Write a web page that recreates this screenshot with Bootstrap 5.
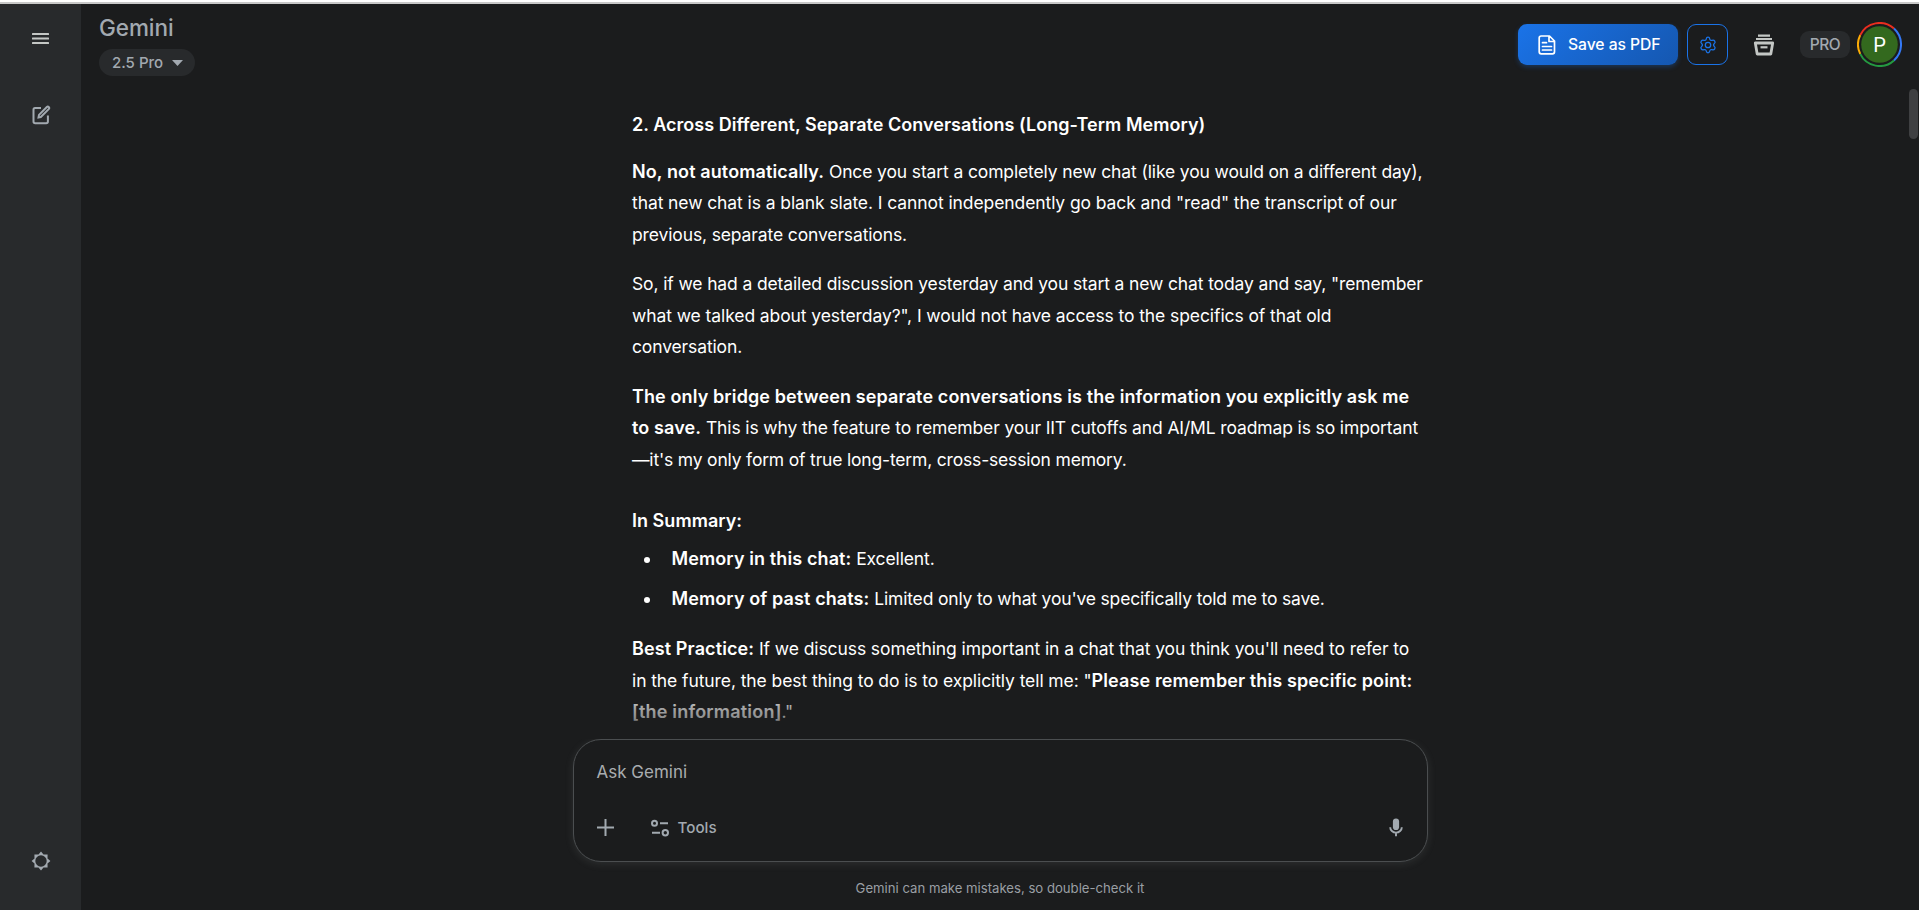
<!DOCTYPE html>
<html lang="en" data-bs-theme="dark">
<head>
<meta charset="utf-8">
<meta name="viewport" content="width=device-width, initial-scale=1">
<title>Gemini</title>
<link rel="stylesheet" href="https://cdn.jsdelivr.net/npm/bootstrap@5.3.0/dist/css/bootstrap.min.css">
<style>
  body { background: #1b1c1d; color: #fff; font-family: Inter, "Liberation Sans", sans-serif; }
  svg { display: block; flex: none; }
  .top-edge { height: 4px; background: #fff; border-bottom: 2px solid #c8c8c8; flex: none; }
  .rail { width: 81px; background: #282a2c; color: #a2a9b0; padding: 28px 0 39px; }
  .rail .icon-menu { color: #c4c7c5; margin-bottom: 60px; }
  .topbar { height: 85px; padding: 10px 17px 0 18px; flex: none; }
  .brand-name { font-size: 22.5px; line-height: 27px; letter-spacing: -.05px; color: #a2a9b0; font-weight: 450; }
  .model-pill { width: 96px; height: 27px; margin-top: 8px; padding: 0 12px 0 13px; background: #282a2c; color: #a2a9b0; font-size: 15px; font-weight: 500; line-height: 27px; }
  .actions { margin-top: 8px; height: 45px; }
  .btn-save { width: 160px; height: 41px; padding: 0 0 0 18px; gap: 10px; border: 0; border-radius: 9px; color: #fff; background: linear-gradient(135deg, #1a73e8, #1557b0); box-shadow: 0 2px 5px rgba(26,115,232,.3); font-size: 15.7px; font-weight: 500; letter-spacing: -.05px; line-height: 1; }
  .btn-gear { width: 41px; height: 41px; margin-left: 9px; padding: 0; border: 1px solid #1a73e8; border-radius: 9px; color: #1a73e8; }
  .icon-stack { margin-left: 25px; }
  .tier { width: 50px; height: 27px; border-radius: 9px; background: #282a2c; color: #a2a9b0; font-size: 15.5px; font-weight: 450; letter-spacing: -.5px; margin-left: 25px; margin-right: 7px; padding-top: 1px; }
  .col-chat { width: 855px; }
  .reading { height: 650px; padding: 20px 0 0 59.500px; font-size: 17.5px; line-height: 31.5px; letter-spacing: -.13px; white-space: nowrap; overflow: hidden; }
  .reading p, .reading h3 { margin: 0 0 18px; }
  .reading h3 { font-size: 18px; font-weight: 600; line-height: 31.5px; letter-spacing: .03px; }
  .reading h3.lead-head { margin-bottom: 15px; }
  .reading h3.list-head { margin-bottom: 6px; }
  .reading p.section-end { margin-bottom: 30px; }
  .reading b { font-size: 18px; font-weight: 600; letter-spacing: .11px; line-height: 1; }
  .reading .snug { letter-spacing: -.09px; }
  .reading .tight { letter-spacing: -.18px; }
  .reading .airy { letter-spacing: .2px; }
  .reading ul { margin: 0 0 19px; padding-left: 39.500px; list-style: none; }
  .reading li { position: relative; }
  .reading li::before { content: ""; position: absolute; left: -28px; top: 14px; width: 6px; height: 6px; border-radius: 50%; background: #fff; }
  .reading li + li { margin-top: 8.500px; }
  .fade-out { height: 46px; background: linear-gradient(rgba(27,28,29,0), rgba(27,28,29,.38) 30%, rgba(27,28,29,.5) 55%, #1b1c1d 95%); }
  .prompt-box { height: 123px; border: 1px solid #4b4e50; border-radius: 28px; background: #1b1c1d; box-shadow: 0 2px 9px rgba(154,160,166,.14); padding: 19px 24px 0 23px; color: #a2a9b0; }
  .ask { font-size: 17px; line-height: 26px; color: #a9acaf; }
  .prompt-tools { margin-top: 32px; }
  .icon-tools { margin: 1px 9px 0 37px; }
  .tools-label { font-size: 15.2px; font-weight: 500; line-height: 20px; padding-top: 1px; }
  .notice { font-size: 13.15px; line-height: 18px; color: #9a9fa4; margin-top: 17px; }
  .scroll-thumb { right: 1px; top: 85px; width: 9px; height: 50px; border-radius: 5px; background: #3f4042; }
</style>
</head>
<body class="vh-100 overflow-hidden d-flex flex-column">
<div class="top-edge"></div>
<div class="d-flex flex-grow-1">
  <aside class="rail d-flex flex-column align-items-center">
    <svg class="icon-menu" width="17" height="13" viewBox="0 0 17 13" fill="currentColor"><rect y="1" width="17" height="2" rx=".5"/><rect y="5.600" width="17" height="2" rx=".5"/><rect y="10" width="17" height="2" rx=".5"/></svg>
    <svg width="20" height="20" viewBox="0 0 20 20" fill="none" stroke="currentColor" stroke-width="2"><path d="M10 3H4Q2.500 3 2.500 4.500v12q0 1.700 1.700 1.700H15.200q1.700 0 1.700-1.700V10.500"/><path d="M8 9.900 15.800 2q1-.8 2 .1.900 1-.1 2L9.800 12l-2.300.4z"/></svg>
    <svg class="mt-auto" width="20" height="20" viewBox="0 0 20 20" fill="currentColor" fill-rule="evenodd"><path d="M10 .6 12.500 3.500 16.600 3.400 16.500 7.500 19.400 10 16.500 12.500 16.600 16.600 12.500 16.500 10 19.400 7.500 16.500 3.400 16.600 3.500 12.500.6 10 3.500 7.500 3.400 3.400 7.500 3.500zM10 4.300a5.700 5.700 0 1 0 0 11.400 5.700 5.700 0 0 0 0-11.400z"/></svg>
  </aside>
  <main class="flex-grow-1 d-flex flex-column align-items-center position-relative">
    <header class="topbar w-100 d-flex justify-content-between">
      <div>
        <div class="brand-name">Gemini</div>
        <div class="model-pill rounded-pill d-flex align-items-center justify-content-between">2.5 Pro<svg width="11" height="6" viewBox="0 0 11 6" fill="currentColor"><path d="M0 0h11L5.500 6z"/></svg></div>
      </div>
      <div class="actions d-flex align-items-center">
        <button class="btn btn-save d-flex align-items-center" type="button">
          <svg width="22" height="22" viewBox="0 0 22 22" fill="none" stroke="currentColor" stroke-width="1.700" stroke-linejoin="round"><path d="M5.200 2h8.300l5 5v10.800q0 2-2 2H5.200q-2 0-2-2V4q0-2 2-2zM13 2v5.500h5.500M6.500 8.700h4M6.500 12.500h9M6.500 16h9" stroke-linecap="round"/></svg>
          <span>Save as PDF</span>
        </button>
        <button class="btn btn-gear d-flex align-items-center justify-content-center" type="button" aria-label="Settings">
          <svg width="18" height="18" viewBox="0 0 24 24" fill="none" stroke="currentColor" stroke-width="1.700" stroke-linejoin="round"><circle cx="12" cy="12" r="3.600"/><path d="M9.600 4.100Q10 1.500 12 1.500t2.400 2.600q.2 1 1.100 1.500t1.800.2q2.400-1 3.700.9t-.8 3.800q-.8.600-.8 1.500t.8 1.500q2.100 1.900.8 3.800t-3.700.9q-.9-.3-1.800.2t-1.100 1.500Q14 22.500 12 22.500t-2.400-2.600q-.2-1-1.100-1.500t-1.800-.2q-2.400 1-3.700-.9t.8-3.800q.8-.6.800-1.500t-.8-1.500Q1.700 8.600 3 6.700t3.700-.9q.9.300 1.800-.2t1.100-1.500z"/></svg>
        </button>
        <svg class="icon-stack" width="22" height="22" viewBox="0 0 22 22" fill="none" stroke="#c4c7c5" stroke-width="2.200"><path d="M5 1.600h12M3 5h16"/><path stroke-width="2.800" stroke-linejoin="round" d="M2.300 9h17.400l-1.900 11H4.200z"/><path d="M7.500 13.300h7"/></svg>
        <span class="tier d-flex align-items-center justify-content-center">PRO</span>
        <svg width="45" height="45" viewBox="0 0 45 45" fill="none" stroke-width="2" role="img" aria-label="Account">
          <circle cx="22.500" cy="22.500" r="18.300" fill="#33691e"/>
          <path stroke="#ea2d1f" d="M3.200 13.100A21.500 21.500 0 0 1 37 6.600"/><path stroke="#3478f6" d="M37 6.600A21.500 21.500 0 0 1 37 38.400"/><path stroke="#249a41" d="M37 38.400A21.500 21.500 0 0 1 3.200 31.900"/><path stroke="#fbab05" d="M3.200 31.900A21.500 21.500 0 0 1 3.200 13.100"/>
          <text x="22.500" y="30" fill="#fff" font-family="Roboto" font-size="20" text-anchor="middle">P</text>
        </svg>
      </div>
    </header>

    <section class="col-chat position-relative">
      <div class="reading">
        <h3 class="lead-head">2. Across Different, Separate Conversations (Long-Term Memory)</h3>
        <p><b>No, not automatically.</b> Once you start a completely new chat (like you would on a different day),<br>
          <span class="snug">that new chat is a blank slate. I cannot independently go back and "read" the transcript of our</span><br>
          previous, separate conversations.</p>
        <p>So, if we had a detailed discussion yesterday and you start a new chat today and say, "remember<br>
          <span class="snug">what we talked about yesterday?", I would not have access to the specifics of that old</span><br>
          conversation.</p>
        <p class="section-end"><b>The only bridge between separate conversations is the information you explicitly ask me<br>
          to save.</b> This is why the feature to remember your IIT cutoffs and AI/ML roadmap is so important<br>
          <span class="tight">—it's my only form of true long-term, cross-session memory.</span></p>
        <h3 class="list-head">In Summary:</h3>
        <ul>
          <li><b>Memory in this chat:</b> Excellent.</li>
          <li><b>Memory of past chats:</b> <span class="tight">Limited only to what you've specifically told me to save.</span></li>
        </ul>
        <p><b>Best Practice:</b> <span class="snug">If we discuss something important in a chat that you think you'll need to refer to<br>
          in the future, the best thing to do is to explicitly tell me: "</span><b>Please remember this specific point:<br>
          <span class="airy">[the information]</span></b>."</p>
      </div>
      <div class="fade-out position-absolute bottom-0 start-0 end-0"></div>
    </section>

    <footer class="col-chat">
      <div class="prompt-box">
        <div class="ask">Ask Gemini</div>
        <div class="prompt-tools d-flex align-items-center">
          <svg width="17" height="17" viewBox="0 0 17 17" stroke="currentColor" stroke-width="2"><path d="M8.500 0v17M0 8.500h17"/></svg>
          <svg class="icon-tools" width="18" height="18" viewBox="0 0 18 18" fill="none" stroke="currentColor" stroke-width="2"><circle cx="3.500" cy="4.200" r="2.500"/><path d="M9 4.200h8M1 13.700h8"/><circle cx="14.300" cy="13.700" r="2.700"/></svg>
          <span class="tools-label">Tools</span>
          <svg class="ms-auto" width="14" height="19" viewBox="0 0 14 19" fill="none" stroke="currentColor" stroke-width="1.900"><rect x="3.900" y=".5" width="6.200" height="11.500" rx="3.100" fill="currentColor" stroke="none"/><path d="M1.200 9.200a5.800 5.400 0 0 0 11.600 0M7 14.500v3.800"/></svg>
        </div>
      </div>
      <div class="notice text-center">Gemini can make mistakes, so double-check it</div>
    </footer>
    <div class="scroll-thumb position-absolute"></div>
  </main>
</div>
<script src="https://cdn.jsdelivr.net/npm/bootstrap@5.3.0/dist/js/bootstrap.bundle.min.js"></script>
</body>
</html>
